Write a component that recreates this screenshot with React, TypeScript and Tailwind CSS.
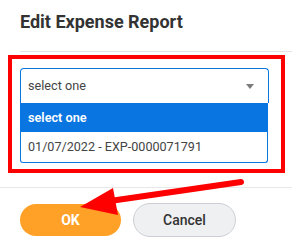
export default function App() {
  return (
    <div className="relative w-[292px] h-[245px] overflow-hidden bg-white font-['Roboto',sans-serif] text-[#333]">
      <h1 className="pl-5 pt-[8px] h-[51px] text-[18px] font-bold leading-[28px] text-[#333]">
        Edit Expense Report
      </h1>
      <div className="ml-5 h-px bg-[#e3e3e3]" />

      <div className="ml-2 mt-[3px] w-[277px] h-[118px] border-4 border-[#ff0000] pl-2 pt-[9px]">
        <div className="flex w-[249px] h-[35px] items-center justify-between rounded-t-[4px] border border-b-0 border-[#0875e1] pl-[7px] pr-[14px]">
          <span className="text-[12.7px] text-[#444]">select one</span>
          <svg width="8" height="5" viewBox="0 0 8 5">
            <path d="M0 0h8L4 5z" fill="#7b7b7b" />
          </svg>
        </div>
        <div className="w-[248px] rounded-b-[3px] border border-t-0 border-[#0875e1]">
          <div className="flex h-[29px] items-center bg-[#0875e1] pl-[7px] text-[12.7px] font-semibold text-white">
            select one
          </div>
          <div className="flex h-[30px] items-center pl-[7px] text-[12.6px] text-[#444]">
            01/07/2022 - EXP-0000071791
          </div>
        </div>
      </div>

      <div className="mt-[14px] h-px bg-[#e8e8e8]" />

      <div className="flex items-center gap-3 pl-5 pt-[15px]">
        <button className="flex w-[101px] h-[32px] items-center justify-center rounded-full bg-[#ffa126] text-[14px] font-bold text-white">
          OK
        </button>
        <button className="flex w-[103px] h-[34px] items-center justify-center rounded-full border border-[#ccd0d4] bg-[#eef0f2] text-[14px] font-medium text-[#333]">
          Cancel
        </button>
      </div>

      <svg className="absolute left-0 top-0" width="292" height="245" viewBox="0 0 292 245">
        <line x1="241" y1="182" x2="110" y2="201" stroke="#ff0000" strokeWidth="6" strokeLinecap="round" />
        <polygon points="80,207 113,188 118,215" fill="#ff0000" />
      </svg>
    </div>
  );
}
